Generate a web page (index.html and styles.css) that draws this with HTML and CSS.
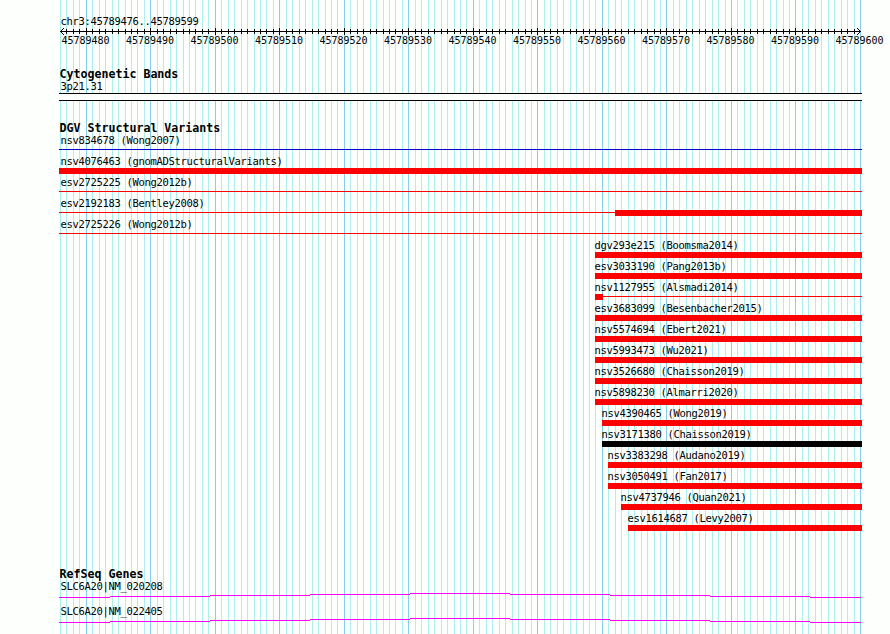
FILE: index.html
```html
<!DOCTYPE html>
<html lang="en">
<head>
<meta charset="utf-8">
<title>chr3:45789476..45789599</title>
<link rel="stylesheet" href="styles.css">
</head>
<body>
<svg class="grid" id="grid" width="890" height="634" shape-rendering="crispEdges" aria-hidden="true"></svg>
<main class="browser">
  <header class="overview">
    <div class="label">chr3:45789476..45789599</div>
    <svg class="axis" id="axis" width="803" height="7" shape-rendering="crispEdges" aria-hidden="true"></svg>
    <div class="scale" id="scale"></div>
  </header>
  <section class="track bands">
    <h2>Cytogenetic Bands</h2>
    <div class="label">3p21.31</div>
    <div class="band"></div>
  </section>
  <section class="track variants">
    <h2>DGV Structural Variants</h2>
    <div id="variants"></div>
  </section>
  <section class="track genes">
    <h2>RefSeq Genes</h2>
    <div class="gene"><div class="label">SLC6A20|NM_020208</div><svg class="intron" width="802" height="5" shape-rendering="crispEdges"></svg></div>
    <div class="gene"><div class="label">SLC6A20|NM_022405</div><svg class="intron" width="802" height="5" shape-rendering="crispEdges"></svg></div>
  </section>
</main>
<script src="main.js"></script>
</body>
</html>
```
FILE: styles.css
```css
body {
  margin: 0;
  width: 890px;
  height: 634px;
  overflow: hidden;
  position: relative;
  background: #fdfffc;
  color: #000;
  font-family: "DejaVu Sans Mono", "Liberation Mono", monospace;
}
.grid { position: absolute; left: 0; top: 0; }
.minor { fill: #afeeee; }
.major { fill: #87ceeb; }
.browser {
  position: relative;
  box-sizing: border-box;
  width: 890px;
  padding: 15px 0 0 59px;
}
.label {
  height: 13px;
  padding-left: 1.4px;
  font-size: 10.5px;
  line-height: 13px;
  letter-spacing: -0.321px;
  white-space: pre;
}
.axis { display: block; }
.scale {
  display: flex;
  gap: 16.5px;
  height: 13px;
  margin-top: -1px;
  padding-left: 2.4px;
  font-size: 10px;
  line-height: 13px;
  letter-spacing: -0.02px;
}
.scale span { flex: 0 0 48px; white-space: pre; }
h2 {
  height: 12px;
  margin: 0;
  padding-left: 0.4px;
  font-size: 11.63px;
  line-height: 12px;
  font-weight: bold;
  white-space: pre;
}
.bands { margin-top: 21px; }
.band {
  box-sizing: border-box;
  width: 803px;
  height: 8px;
  border: solid #000;
  border-width: 1px 0;
  background: #fdfffc;
}
.variants { margin-top: 21px; }
.row { height: 21px; width: 803px; }
.row.offset .label { padding-left: 0; margin-left: -0.6px; }
.bar { display: flex; height: 6px; }
.thick { height: 6px; }
.thin { height: 1px; margin-top: 2px; }
.rest { flex: 1; }
.red { background: #f00; }
.blue { background: #0000cd; }
.black { background: #000; }
.genes { margin-top: 35px; }
.gene { height: 25px; }
.intron { display: block; fill: #f0f; }
```
FILE: main.js
```js
const rect = (x, y, w, h, cls = "") => `<rect x="${x}" y="${y}" width="${w}" height="${h}" class="${cls}"/>`;
const START = 45789476;
const pos = k => Math.round(60 + k * 800 / 124);

let grid = "", axis = rect(1, 3, 801, 1), scale = "";
for (let k = 0; k <= 124; k++) {
  const major = (START + k) % 10 === 0;
  const x = pos(k);
  grid += rect(x, 0, 1, 634, major ? "major" : "minor");
  if (k > 0 && k < 124) axis += major ? rect(x - 59, 0, 1, 7) : rect(x - 59, 1, 1, 5);
  if (major) scale += `<span>${START + k}</span>`;
}
for (let i = 1; i <= 3; i++) {
  axis += rect(1 + i, 3 - i, 1, 1) + rect(1 + i, 3 + i, 1, 1);
  axis += rect(801 - i, 3 - i, 1, 1) + rect(801 - i, 3 + i, 1, 1);
}
document.getElementById("grid").innerHTML = grid;
document.getElementById("axis").innerHTML = axis;
document.getElementById("scale").innerHTML = scale;

// name, left edge, parts: [thickness, colour, width]; no width fills the rest
const full = [["thick", "red"]];
const line = [["thin", "red"]];
const variants = [
  ["nsv834678 (Wong2007)", 59, [["thin", "blue"]]],
  ["nsv4076463 (gnomADStructuralVariants)", 59, full],
  ["esv2725225 (Wong2012b)", 59, line],
  ["esv2192183 (Bentley2008)", 59, [["thin", "red", 556], ["thick", "red"]]],
  ["esv2725226 (Wong2012b)", 59, line],
  ["dgv293e215 (Boomsma2014)", 595, full],
  ["esv3033190 (Pang2013b)", 595, full],
  ["nsv1127955 (Alsmadi2014)", 595, [["thick", "red", 8], ["thin", "red"]]],
  ["esv3683099 (Besenbacher2015)", 595, full],
  ["nsv5574694 (Ebert2021)", 595, full],
  ["nsv5993473 (Wu2021)", 595, full],
  ["nsv3526680 (Chaisson2019)", 595, full],
  ["nsv5898230 (Almarri2020)", 595, full],
  ["nsv4390465 (Wong2019)", 602, full],
  ["nsv3171380 (Chaisson2019)", 602, [["thick", "black"]]],
  ["nsv3383298 (Audano2019)", 608, full],
  ["nsv3050491 (Fan2017)", 608, full],
  ["nsv4737946 (Quan2021)", 621, full],
  ["esv1614687 (Levy2007)", 628, full]
];
document.getElementById("variants").innerHTML = variants.map(([name, left, parts]) =>
  `<div class="row${left > 59 ? " offset" : ""}" style="padding-left:${left - 59}px;width:${862 - left}px">
    <div class="label">${name}</div>
    <div class="bar">${parts.map(([t, c, w]) =>
      w ? `<i class="${t} ${c}" style="width:${w}px"></i>` : `<i class="${t} ${c} rest"></i>`).join("")}</div>
  </div>`).join("");

const steps = [[0, 51, 4], [51, 100, 3], [151, 100, 2], [251, 100, 1], [351, 100, 0],
  [451, 100, 1], [551, 100, 2], [651, 100, 3], [751, 51, 4]];
document.querySelectorAll(".intron").forEach(svg => {
  svg.innerHTML = steps.map(([x, w, y]) => rect(x, y, w, 1)).join("");
});
```
